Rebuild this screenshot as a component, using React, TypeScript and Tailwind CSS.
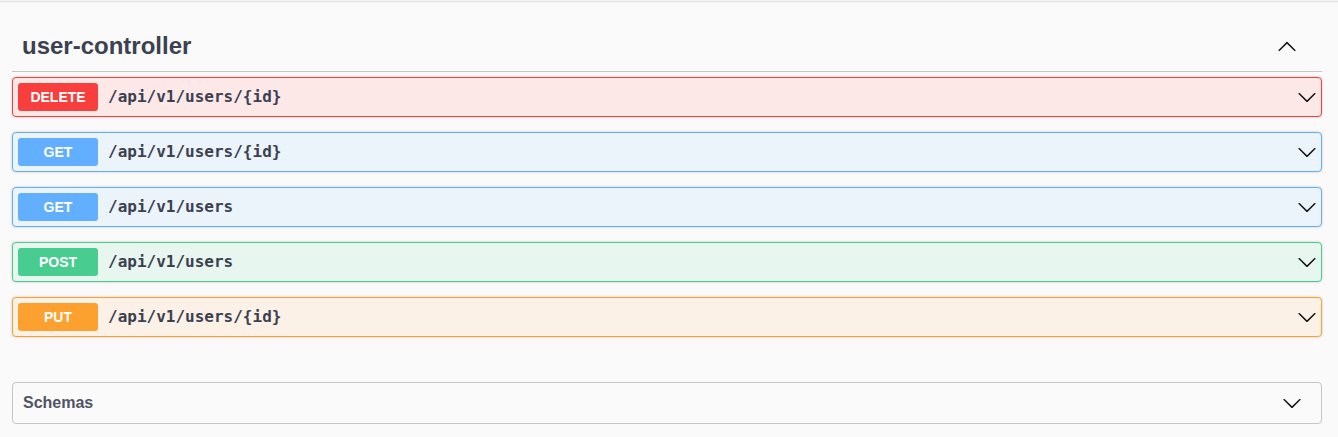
import React from "react";

const Down = ({ className = "" }: { className?: string }) => (
  <svg width="20" height="20" viewBox="0 0 20 20" className={className} fill="#111">
    <path d="M17.418 6.109c.272-.268.709-.268.979 0s.271.701 0 .969l-7.908 7.83c-.27.268-.707.268-.979 0l-7.908-7.830c-.27-.268-.27-.701 0-.969.271-.268.709-.268.979 0L10 13.25l7.418-7.141z" />
  </svg>
);

const Up = () => (
  <svg width="20" height="20" viewBox="0 0 20 20" fill="#111">
    <path d="M17.418 14.908c.272.268.709.268.979 0s.271-.701 0-.969l-7.908-7.83a.697.697 0 0 0-.979 0l-7.908 7.83c-.27.268-.27.701 0 .969.271.268.709.268.979 0L10 7.767l7.418 7.141z" />
  </svg>
);

type Op = { method: string; path: string; kind: "delete" | "get" | "post" | "put" };

const ops: Op[] = [
  { method: "DELETE", path: "/api/v1/users/{id}", kind: "delete" },
  { method: "GET", path: "/api/v1/users/{id}", kind: "get" },
  { method: "GET", path: "/api/v1/users", kind: "get" },
  { method: "POST", path: "/api/v1/users", kind: "post" },
  { method: "PUT", path: "/api/v1/users/{id}", kind: "put" },
];

const styles: Record<Op["kind"], { box: string; badge: string }> = {
  delete: { box: "border-[#f93e3e] bg-[#fde8e8]", badge: "bg-[#f93e3e]" },
  get: { box: "border-[#61affe] bg-[#ebf3fb]", badge: "bg-[#61affe]" },
  post: { box: "border-[#49cc90] bg-[#e8f6f0]", badge: "bg-[#49cc90]" },
  put: { box: "border-[#fca130] bg-[#fbf1e6]", badge: "bg-[#fca130]" },
};

export default function App() {
  return (
    <div
      className="w-[1338px] h-[437px] bg-[#fafafa] overflow-hidden"
      style={{ fontFamily: '"Liberation Sans", Arial, sans-serif' }}
    >
      <div className="h-[1px] bg-[#f1f1f1]" />
      <div className="h-[1px] bg-[#e4e4e4]" />
      <div className="h-[1px] bg-[#f3f3f3]" />
      <div className="ml-[12px] w-[1310px] pt-[18px]">
        <div className="flex items-center h-[51px] border-b border-[#c4c6cb] pl-[10px] pr-[25px]">
          <h3 className="flex-1 text-[24px] leading-[27.6px] font-bold text-[#3b4151]">user-controller</h3>
          <Up />
        </div>
        <div className="mt-[5px] flex flex-col gap-[15px]">
          {ops.map((op, i) => (
            <div
              key={i}
              className={`flex items-center h-[40px] border rounded-[4px] shadow-[0_0_3px_rgba(0,0,0,0.19)] p-[5px] pr-[4px] ${styles[op.kind].box}`}
            >
              <div
                className={`w-[80px] h-[28px] rounded-[3px] flex items-center justify-center text-white text-[14px] font-bold ${styles[op.kind].badge}`}
              >
                {op.method}
              </div>
              <div
                className="flex-1 px-[10px] text-[16px] font-bold text-[#3b4151]"
                style={{ fontFamily: '"DejaVu Sans Mono", monospace' }}
              >
                {op.path}
              </div>
              <Down />
            </div>
          ))}
        </div>
        <div className="mt-[45px] h-[42px] border border-[#c4c6cb] rounded-[4px] flex items-center pl-[10px] pr-[19px]">
          <span className="flex-1 text-[16px] font-bold text-[#505563]">Schemas</span>
          <Down />
        </div>
      </div>
    </div>
  );
}
